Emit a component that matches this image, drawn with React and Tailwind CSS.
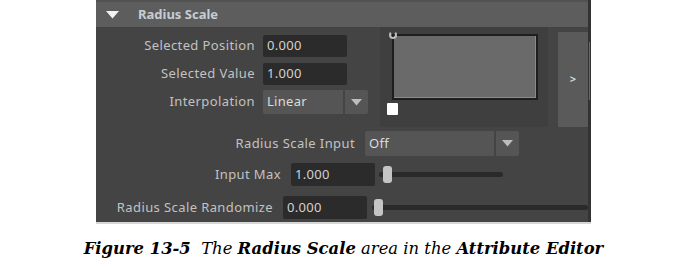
import React from 'react'

const ui = { fontFamily: '"Noto Sans", "Open Sans", sans-serif' }

function Field({ value, className = '' }) {
  return (
    <div className={`h-[22px] bg-[#2b2b2b] rounded-[2px] flex items-center px-[4px] text-[13px] tracking-[0.3px] text-[#d2d2d2] ${className}`}>
      {value}
    </div>
  )
}

function Label({ children, className = '' }) {
  return (
    <span className={`text-right text-[13px] tracking-[0.4px] text-[#c2c2c2] whitespace-nowrap ${className}`}>
      {children}
    </span>
  )
}

function Dropdown({ value, mainW, arrowW, h }) {
  return (
    <div className="flex gap-[2px]" style={{ height: h }}>
      <div className="bg-[#555555] rounded-l-[2px] flex items-center px-[4px] text-[13px] tracking-[0.3px] text-[#dcdcdc]" style={{ width: mainW }}>
        {value}
      </div>
      <div className="bg-[#555555] rounded-r-[2px] flex items-center justify-center" style={{ width: arrowW }}>
        <svg width="11" height="7" viewBox="0 0 11 7">
          <path d="M0 0 H11 L5.5 6.5 Z" fill="#bdbdbd" />
        </svg>
      </div>
    </div>
  )
}

function Slider({ width, knob }) {
  return (
    <div className="relative h-[18px]" style={{ width }}>
      <div className="absolute left-0 right-0 top-[6px] h-[5px] rounded-full bg-[#2a2a2a]" />
      <div className="absolute top-0 h-[17px] w-[9px] rounded-[3px] bg-[#c4c4c4]" style={{ left: knob }} />
    </div>
  )
}

export default function App() {
  return (
    <div className="w-[687px] h-[268px] bg-white">
      <div className="ml-[96px] w-[495px] bg-[#444444] border-r-[3px] border-[#333333] relative" style={ui}>
        {/* header */}
        <div className="h-[27px] bg-[#5d5d5d] border-t-2 border-[#525252] flex items-center">
          <svg className="ml-[10px]" width="13" height="8" viewBox="0 0 13 8">
            <path d="M0 0 H13 L6.5 7.5 Z" fill="#f2f2f2" />
          </svg>
          <span className="ml-[19px] text-[13px] font-bold text-[#c6ccd4]">Radius Scale</span>
        </div>

        {/* top block */}
        <div className="flex">
          <div className="w-[284px] pt-[8px] flex flex-col gap-[6px]">
            <div className="flex items-center gap-[8px]">
              <Label className="w-[159px]">Selected Position</Label>
              <Field value="0.000" className="w-[84px]" />
            </div>
            <div className="flex items-center gap-[8px]">
              <Label className="w-[159px]">Selected Value</Label>
              <Field value="1.000" className="w-[84px]" />
            </div>
            <div className="flex items-center gap-[8px] -mt-[1px]">
              <Label className="w-[159px]">Interpolation</Label>
              <Dropdown value="Linear" mainW={80} arrowW={23} h={24} />
            </div>
          </div>

          <div className="w-[168px] h-[100px] bg-[#3f3f3f] pl-[12px] pt-[7px]">
            <div className="relative w-[146px] h-[66px] border-2 border-[#1e1e1e] bg-[#6a6a6a] shadow-[inset_-1px_-1px_0_#8a8a8a]">
              <div className="absolute -left-[5px] -top-[5px] w-[8px] h-[8px] rounded-full border-2 border-[#bdbdbd] border-t-transparent" />
            </div>
            <div className="mt-[3px] -ml-[5px] w-[11px] h-[12px] bg-white rounded-[1px]" />
          </div>

          <div className="ml-[10px] mt-[5px] w-[30px] h-[95px] bg-[#5a5a5a] flex items-center justify-center text-[11px] font-bold text-[#c8d4e0]">
            &gt;
          </div>
        </div>

        {/* lower rows */}
        <div className="pt-[4px] pb-[3px] flex flex-col">
          <div className="flex items-center gap-[10px]">
            <Label className="w-[259px]">Radius Scale Input</Label>
            <Dropdown value="Off" mainW={129} arrowW={23} h={25} />
          </div>
          <div className="flex items-center mt-[7px]">
            <Label className="w-[185px]">Input Max</Label>
            <Field value="1.000" className="ml-[10px] w-[84px] h-[23px]" />
            <div className="ml-[4px]">
              <Slider width={124} knob={4} />
            </div>
          </div>
          <div className="flex items-center mt-[10px]">
            <Label className="w-[177px]">Radius Scale Randomize</Label>
            <Field value="0.000" className="ml-[10px] w-[84px] h-[23px]" />
            <div className="ml-[5px]">
              <Slider width={216} knob={2} />
            </div>
          </div>
        </div>

        <div className="absolute right-[-2px] top-[42px] w-[1px] h-[58px] bg-[#6a6a6a]" />
      </div>
      <div className="ml-[96px] w-[495px] h-[2px] bg-[#d6d6d6]" />

      <div
        className="mt-[13px] text-center text-[16.4px] italic text-black"
        style={{ fontFamily: '"DejaVu Serif", "Liberation Serif", serif' }}
      >
        <b>Figure 13-5</b>&nbsp; The <b>Radius Scale</b> area in the <b>Attribute Editor</b>
      </div>
    </div>
  )
}
